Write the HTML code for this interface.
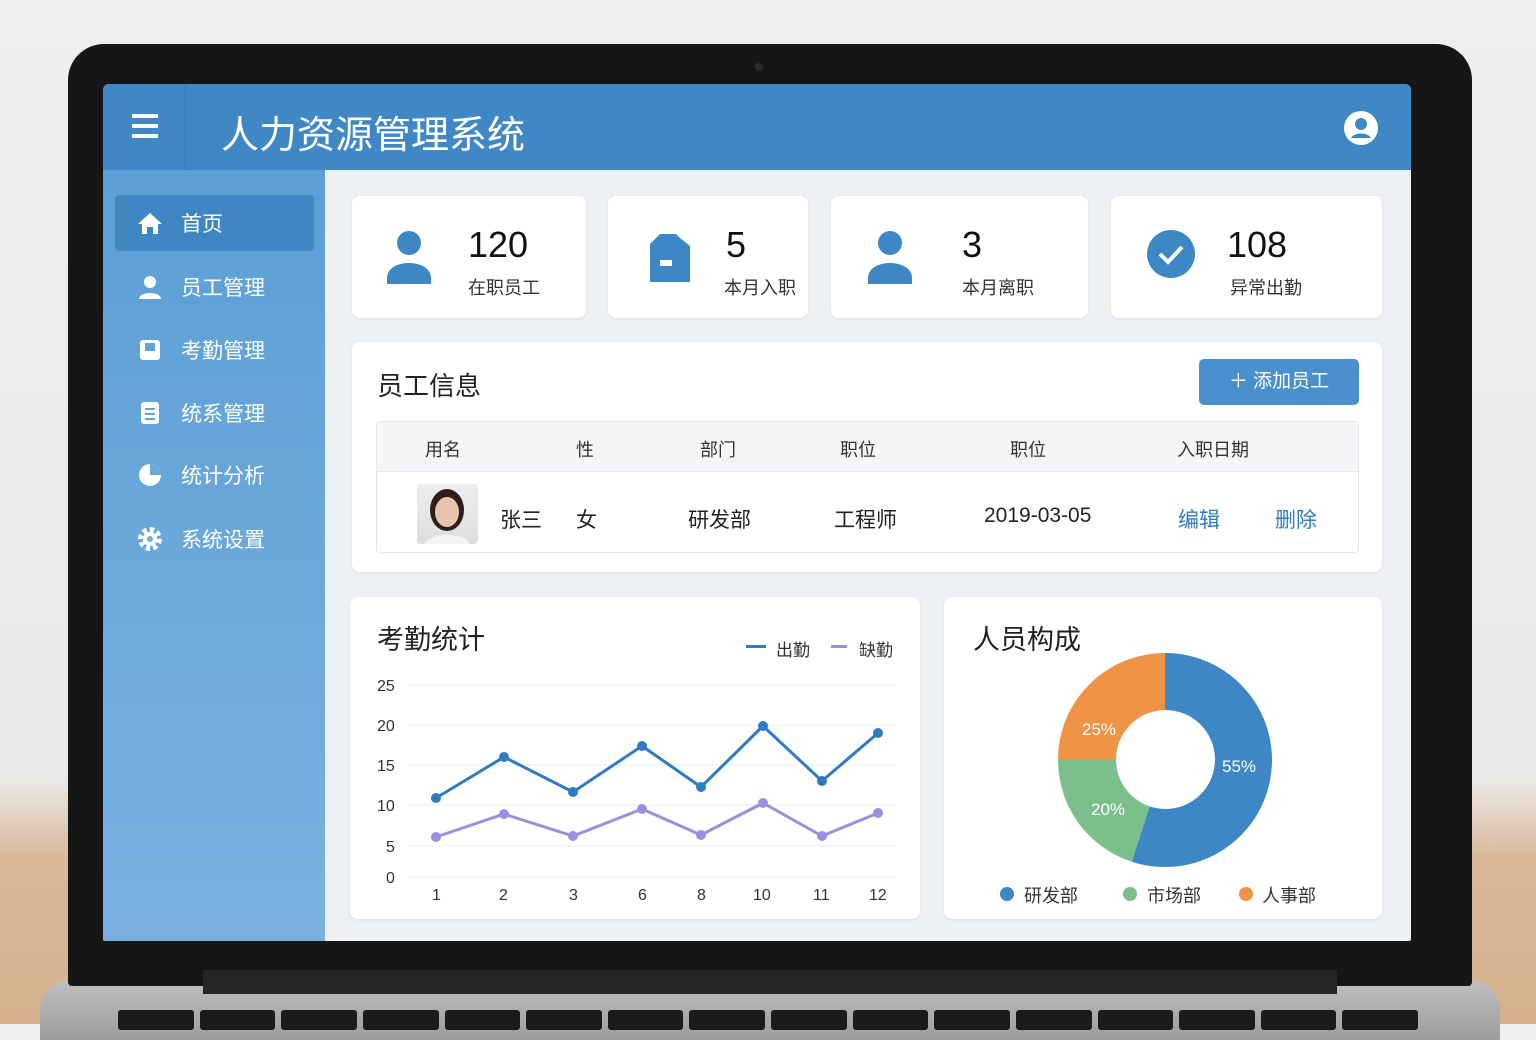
<!DOCTYPE html>
<html><head><meta charset="utf-8"><style>
*{margin:0;padding:0;box-sizing:border-box}
body{width:1536px;height:1024px;overflow:hidden;position:relative;font-family:"Liberation Sans","Noto Sans CJK SC",sans-serif;background:linear-gradient(#efefef 0,#e9e8e6 780px,#d9b797 860px,#d6b08c 1024px)}
.abs{position:absolute;white-space:nowrap}
.card{position:absolute;background:#fff;border-radius:8px;box-shadow:0 1px 3px rgba(0,0,0,.08)}
.num{position:absolute;font-size:36px;color:#111}
.lbl{position:absolute;font-size:18px;color:#333;white-space:nowrap}
.nav{position:absolute;left:115px;width:199px;height:56px;color:#fff;font-size:21px;display:flex;align-items:center;padding-left:22px}
.nav span{margin-left:18px}
</style></head><body>
<div class="abs" style="left:40px;top:980px;width:1460px;height:60px;background:linear-gradient(#bfbfc1,#9c9c9e);border-radius:30px 30px 0 0"></div>
<div class="abs" style="left:118px;top:1010px;width:1300px;height:20px;display:flex;gap:6px">
<div style="flex:1;background:#1b1b1b;border-radius:3px"></div><div style="flex:1;background:#1b1b1b;border-radius:3px"></div><div style="flex:1;background:#1b1b1b;border-radius:3px"></div><div style="flex:1;background:#1b1b1b;border-radius:3px"></div><div style="flex:1;background:#1b1b1b;border-radius:3px"></div><div style="flex:1;background:#1b1b1b;border-radius:3px"></div><div style="flex:1;background:#1b1b1b;border-radius:3px"></div><div style="flex:1;background:#1b1b1b;border-radius:3px"></div><div style="flex:1;background:#1b1b1b;border-radius:3px"></div><div style="flex:1;background:#1b1b1b;border-radius:3px"></div><div style="flex:1;background:#1b1b1b;border-radius:3px"></div><div style="flex:1;background:#1b1b1b;border-radius:3px"></div><div style="flex:1;background:#1b1b1b;border-radius:3px"></div><div style="flex:1;background:#1b1b1b;border-radius:3px"></div><div style="flex:1;background:#1b1b1b;border-radius:3px"></div><div style="flex:1;background:#1b1b1b;border-radius:3px"></div></div>
<div class="abs" style="left:68px;top:44px;width:1404px;height:942px;background:#161616;border-radius:36px 36px 4px 4px"></div>
<div class="abs" style="left:203px;top:970px;width:1134px;height:24px;background:#262626"></div>
<div class="abs" style="left:755px;top:63px;width:8px;height:8px;border-radius:50%;background:#2a2a2a"></div>
<div class="abs" style="left:103px;top:84px;width:1308px;height:857px;background:#eef1f4;border-radius:6px 6px 2px 2px;overflow:hidden">
 <div class="abs" style="left:0;top:0;width:1308px;height:86px;background:#3f88c5"></div>
 <div class="abs" style="left:82px;top:0;width:1px;height:86px;background:#3578b2"></div>
 <div class="abs" style="left:29px;top:30px;width:26px;height:4px;background:#fff;box-shadow:0 10px 0 #fff,0 20px 0 #fff"></div>
 <div class="abs" style="left:118px;top:20px;font-size:38px;color:#fff">人力资源管理系统</div>
 <div class="abs" style="left:1241px;top:27px;width:34px;height:34px;border-radius:50%;background:#fff"><svg width="34" height="34"><circle cx="17" cy="13" r="6" fill="#3f88c5"/><path d="M7 27c3-6 17-6 20 0" fill="#3f88c5"/></svg></div>
 <div class="abs" style="left:0;top:86px;width:222px;height:771px;background:linear-gradient(#5b9fd5,#7ab1e0)"></div>
</div>
<div class="nav" style="top:195px;background:#3f86c3;border-radius:4px"><svg width="26" height="24"><path d="M13 2L1 13h4v10h5v-7h6v7h5V13h4z" fill="#fff"/></svg><span>首页</span></div>
<div class="nav" style="top:259px"><svg width="26" height="26"><circle cx="13" cy="8" r="6" fill="#fff"/><path d="M2 25c0-8 22-8 22 0z" fill="#fff"/></svg><span>员工管理</span></div>
<div class="nav" style="top:322px"><svg width="26" height="26"><rect x="3" y="3" width="20" height="20" rx="3" fill="#fff"/><rect x="8" y="6" width="10" height="8" fill="#5ea2d6"/></svg><span>考勤管理</span></div>
<div class="nav" style="top:385px"><svg width="26" height="26"><rect x="4" y="2" width="18" height="22" rx="3" fill="#fff"/><path d="M8 9h10M8 14h10M8 19h10" stroke="#64a6d9" stroke-width="2"/></svg><span>统系管理</span></div>
<div class="nav" style="top:447px"><svg width="26" height="26"><circle cx="13" cy="13" r="11" fill="#fff"/><path d="M13 13V2a11 11 0 0 1 11 11z" fill="#6aa9db"/></svg><span>统计分析</span></div>
<div class="nav" style="top:511px"><svg width="26" height="26"><circle cx="13" cy="13" r="9" fill="none" stroke="#fff" stroke-width="6" stroke-dasharray="4 3"/><circle cx="13" cy="13" r="7" fill="#fff"/><circle cx="13" cy="13" r="3" fill="#70acdd"/></svg><span>系统设置</span></div>
<div class="card" style="left:352px;top:196px;width:234px;height:122px"></div>
<div class="card" style="left:608px;top:196px;width:200px;height:122px"></div>
<div class="card" style="left:831px;top:196px;width:257px;height:122px"></div>
<div class="card" style="left:1111px;top:196px;width:271px;height:122px"></div>
<svg class="abs" style="left:385px;top:228px" width="48" height="58"><circle cx="24" cy="15" r="12" fill="#3d87c4"/><path d="M2 56v-6c0-20 44-20 44 0v6z" fill="#3d87c4"/></svg>
<svg class="abs" style="left:648px;top:232px" width="44" height="52"><path d="M2 12l10-10h16l4 4 10 8v36H2z" fill="#3d87c4"/><rect x="12" y="28" width="12" height="6" fill="#fff"/></svg>
<svg class="abs" style="left:866px;top:228px" width="48" height="58"><circle cx="24" cy="15" r="12" fill="#3d87c4"/><path d="M2 56v-6c0-20 44-20 44 0v6z" fill="#3d87c4"/></svg>
<svg class="abs" style="left:1146px;top:229px" width="50" height="50"><circle cx="25" cy="25" r="24" fill="#3d87c4"/><path d="M14 25l8 8 14-15" stroke="#fff" stroke-width="4" fill="none"/></svg>
<div class="num" style="left:468px;top:224px">120</div><div class="lbl" style="left:468px;top:274px">在职员工</div>
<div class="num" style="left:726px;top:224px">5</div><div class="lbl" style="left:724px;top:274px">本月入职</div>
<div class="num" style="left:962px;top:224px">3</div><div class="lbl" style="left:962px;top:274px">本月离职</div>
<div class="num" style="left:1227px;top:224px">108</div><div class="lbl" style="left:1230px;top:274px">异常出勤</div>
<div class="card" style="left:352px;top:342px;width:1030px;height:230px"></div>
<div class="abs" style="left:377px;top:366px;font-size:26px;color:#222">员工信息</div>
<div class="abs" style="left:1199px;top:359px;width:160px;height:46px;background:#4a90cd;border-radius:5px;color:#fff;font-size:19px;line-height:46px;text-align:center">＋ 添加员工</div>
<div class="abs" style="left:376px;top:421px;width:983px;height:132px;border:1px solid #e3e6ea;border-radius:4px;background:#fff"></div>
<div class="abs" style="left:377px;top:422px;width:981px;height:50px;background:#f4f5f7;border-bottom:1px solid #e3e6ea"></div>
<div class="abs" style="top:436px;left:0;font-size:18px;color:#333">
<span class="abs" style="left:425px">用名</span><span class="abs" style="left:576px">性</span><span class="abs" style="left:700px">部门</span><span class="abs" style="left:840px">职位</span><span class="abs" style="left:1010px">职位</span><span class="abs" style="left:1177px">入职日期</span></div>
<div class="abs" style="left:417px;top:484px;width:61px;height:60px;border-radius:4px;background:linear-gradient(#eee,#ddd);overflow:hidden"><svg width="61" height="60"><ellipse cx="30" cy="26" rx="17" ry="21" fill="#2a1f1a"/><ellipse cx="30" cy="28" rx="12" ry="15" fill="#e8c4ad"/><path d="M8 60c2-12 42-12 45 0z" fill="#f4f4f4"/></svg></div>
<div class="abs" style="top:504px;left:0;font-size:21px;color:#222">
<span class="abs" style="left:500px">张三</span><span class="abs" style="left:576px">女</span><span class="abs" style="left:688px">研发部</span><span class="abs" style="left:834px">工程师</span><span class="abs" style="left:984px">2019-03-05</span><span class="abs" style="left:1178px;color:#2f7bc2">编辑</span><span class="abs" style="left:1275px;color:#2f7bc2">删除</span></div>
<div class="card" style="left:350px;top:597px;width:570px;height:322px"></div>
<div class="abs" style="left:377px;top:618px;font-size:27px;color:#222">考勤统计</div>
<div class="abs" style="left:746px;top:645px;width:20px;height:3px;background:#2f7bc2"></div><div class="abs" style="left:776px;top:636px;font-size:17px;color:#333">出勤</div>
<div class="abs" style="left:831px;top:645px;width:16px;height:3px;background:#9a8fe0"></div><div class="abs" style="left:859px;top:636px;font-size:17px;color:#333">缺勤</div>
<svg class="abs" style="left:0;top:0" width="1536" height="1024">
<g stroke="#eceef0"><line x1="410" y1="685" x2="895" y2="685"/><line x1="410" y1="725" x2="895" y2="725"/><line x1="410" y1="765" x2="895" y2="765"/><line x1="410" y1="805" x2="895" y2="805"/><line x1="410" y1="846" x2="895" y2="846"/><line x1="410" y1="877" x2="895" y2="877"/></g>
<g font-size="16" fill="#333" font-family="Liberation Sans"><text x="377" y="691">25</text><text x="377" y="731">20</text><text x="377" y="771">15</text><text x="377" y="811">10</text><text x="386" y="852">5</text><text x="386" y="883">0</text>
<text x="432" y="900">1</text><text x="499" y="900">2</text><text x="569" y="900">3</text><text x="638" y="900">6</text><text x="697" y="900">8</text><text x="753" y="900">10</text><text x="813" y="900">11</text><text x="869" y="900">12</text></g>
<polyline points="436,798 504,757 573,792 642,746 701,787 763,726 822,781 878,733" fill="none" stroke="#2f7bc2" stroke-width="3"/>
<polyline points="436,837 504,814 573,836 642,809 701,835 763,803 822,836 878,813" fill="none" stroke="#9a8fe0" stroke-width="3"/>
<g fill="#2f7bc2"><circle cx="436" cy="798" r="5"/><circle cx="504" cy="757" r="5"/><circle cx="573" cy="792" r="5"/><circle cx="642" cy="746" r="5"/><circle cx="701" cy="787" r="5"/><circle cx="763" cy="726" r="5"/><circle cx="822" cy="781" r="5"/><circle cx="878" cy="733" r="5"/></g>
<g fill="#9a8fe0"><circle cx="436" cy="837" r="5"/><circle cx="504" cy="814" r="5"/><circle cx="573" cy="836" r="5"/><circle cx="642" cy="809" r="5"/><circle cx="701" cy="835" r="5"/><circle cx="763" cy="803" r="5"/><circle cx="822" cy="836" r="5"/><circle cx="878" cy="813" r="5"/></g>
</svg>
<div class="card" style="left:944px;top:597px;width:438px;height:322px"></div>
<div class="abs" style="left:973px;top:618px;font-size:27px;color:#222">人员构成</div>
<div class="abs" style="left:1058px;top:653px;width:214px;height:214px;border-radius:50%;background:conic-gradient(#3d87c4 0 198deg,#7cbf8c 198deg 270deg,#ef9347 270deg 360deg)"></div>
<div class="abs" style="left:1116px;top:710px;width:99px;height:99px;border-radius:50%;background:#fff"></div>
<div class="abs" style="left:1082px;top:720px;font-size:17px;color:#fff">25%</div>
<div class="abs" style="left:1222px;top:757px;font-size:17px;color:#fff">55%</div>
<div class="abs" style="left:1091px;top:800px;font-size:17px;color:#fff">20%</div>
<div class="abs" style="top:882px;left:0;font-size:18px;color:#333">
<span class="abs" style="left:1000px;top:5px;width:14px;height:14px;border-radius:50%;background:#3d87c4"></span><span class="abs" style="left:1024px">研发部</span>
<span class="abs" style="left:1123px;top:5px;width:14px;height:14px;border-radius:50%;background:#7cbf8c"></span><span class="abs" style="left:1147px">市场部</span>
<span class="abs" style="left:1239px;top:5px;width:14px;height:14px;border-radius:50%;background:#ef9347"></span><span class="abs" style="left:1262px">人事部</span></div>
</body></html>
